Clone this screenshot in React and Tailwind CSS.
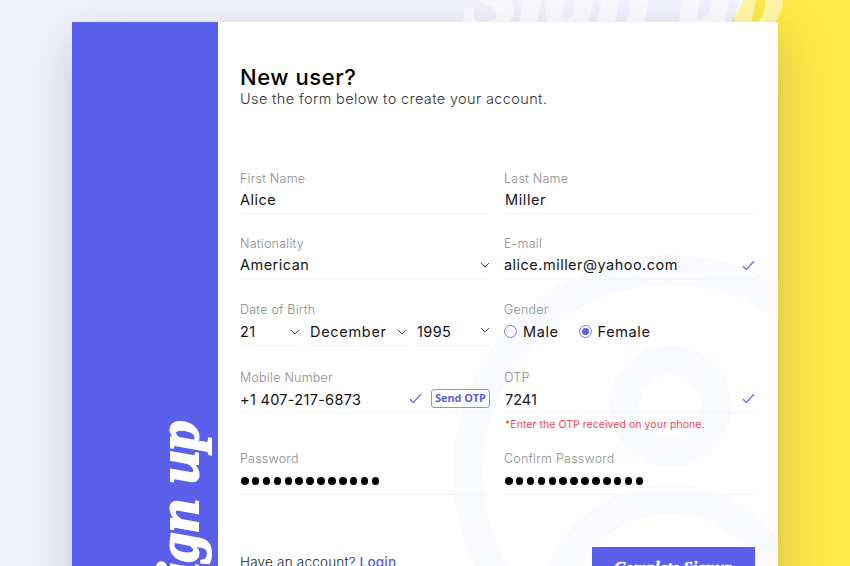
import React from "react";

const SANS = "font-['Inter','Noto_Sans',sans-serif]";

function Check() {
  return (
    <svg width="13" height="11" viewBox="0 0 13 11" fill="none" className="shrink-0">
      <path d="M1 6.2 4.4 9.4 12 1.2" stroke="#5b5fe6" strokeWidth="1.2" />
    </svg>
  );
}

function Chevron({ className = "" }) {
  return (
    <svg width="10" height="6" viewBox="0 0 10 6" fill="none" className={`shrink-0 ${className}`}>
      <path d="M1 1 5 5 9 1" stroke="#444" strokeWidth="1" />
    </svg>
  );
}

function Label({ children, className = "pt-px" }) {
  return <div className={`h-4 text-[12.5px] leading-4 font-light tracking-[0.23px] text-[#8c8c8c] ${className}`}>{children}</div>;
}

function Row({ children, className = "pb-px" }) {
  return (
    <div className={`flex h-[28px] items-center justify-between border-b border-[#f4f5f8] ${className}`}>
      {children}
    </div>
  );
}

function Value({ children, className = "tracking-[0.48px]" }) {
  return <span className={`text-[14.5px] leading-5 text-[#151515] ${className}`}>{children}</span>;
}

function Dots() {
  return (
    <div className="flex gap-[3.4px] pt-[2px] pl-px">
      {Array.from({ length: 13 }, (_, i) => (
        <span key={i} className="size-[7.5px] rounded-full bg-black" />
      ))}
    </div>
  );
}

function Radio({ label, checked }) {
  return (
    <div className="flex items-center gap-[6px]">
      <span className="mb-px flex size-[13px] items-center justify-center rounded-full border border-[#777aeb]">
        {checked && <span className="size-[7px] rounded-full bg-[#5a60ea]" />}
      </span>
      <Value className="tracking-[0.6px]">{label}</Value>
    </div>
  );
}

export default function App() {
  return (
    <div className={`relative h-[566px] w-[850px] overflow-hidden bg-[#f4f4fe] pt-[22px] pl-[72px] ${SANS}`}>
      <svg className="absolute inset-0" width="850" height="566">
        <path d="M744 0H850V566H600V260Z" fill="#feea46" />
      </svg>
      <div className="absolute top-[22px] left-[72px] h-[640px] w-[706px] shadow-[0_16px_48px_rgba(60,60,70,0.27)]" />
      <svg className="absolute inset-0" width="850" height="566">
        <text
          x="462" y="27" fontSize="88" fill="#ffffff" opacity="0.5"
          stroke="#ffffff" strokeWidth="4"
          fontFamily="Liberation Serif, serif" fontWeight="700" fontStyle="italic"
          textLength="322" lengthAdjust="spacingAndGlyphs"
        >
          Sign up
        </text>
      </svg>
      <div className="relative flex h-[640px] w-[706px] bg-white">
        <aside className="flex w-[146px] shrink-0 justify-end bg-[#5a60ea] pt-[398px] pr-[14px]">
          <span className="h-[240px] rotate-180 text-right font-['Liberation_Serif',serif] text-[60px] leading-[52px] font-bold whitespace-nowrap text-white italic [-webkit-text-stroke:2px_white] [writing-mode:vertical-rl]">
            Sign up
          </span>
        </aside>
        <main className="relative flex-1 overflow-hidden pt-[43px] pl-[22px]">
          <svg className="absolute inset-0" width="560" height="640" fill="none" stroke="#f8faff" strokeWidth="30">
            <circle cx="452" cy="450" r="202" />
            <circle cx="452" cy="384" r="46" />
            <circle cx="452" cy="595" r="118" />
          </svg>
          <div className="relative w-[516px]">
            <h1 className="h-6 text-[22px] leading-6 font-medium tracking-[0.55px] text-black">New user?</h1>
            <p className="h-5 text-[14.5px] leading-5 font-light tracking-[0.37px] text-[#333]">Use the form below to create your account.</p>
            <div className="mt-[61px] grid grid-cols-[250px_251px] gap-x-[14px]">
              <div className="h-[66px]">
                <Label>First Name</Label>
                <Row className=""><Value>Alice</Value></Row>
              </div>
              <div className="h-[66px]">
                <Label>Last Name</Label>
                <Row className=""><Value className="pl-px tracking-[0.6px]">Miller</Value></Row>
              </div>
              <div className="h-[66px]">
                <Label className="">Nationality</Label>
                <Row><Value>American</Value><Chevron /></Row>
              </div>
              <div className="h-[66px]">
                <Label className="">E-mail</Label>
                <Row><Value>alice.miller@yahoo.com</Value><Check /></Row>
              </div>
              <div className="h-[67px]">
                <Label className="">Date of Birth</Label>
                <div className="flex gap-[9px]">
                  <Row className="w-[60px]"><Value>21</Value><Chevron /></Row>
                  <Row className="w-[98px]"><Value className="pl-px tracking-[0.7px]">December</Value><Chevron /></Row>
                  <Row className="w-[74px]"><Value className="pl-px tracking-[0.4px]">1995</Value><Chevron className="mb-[3px]" /></Row>
                </div>
              </div>
              <div className="h-[67px]">
                <Label className="">Gender</Label>
                <div className="flex h-[28px] items-center gap-[20px] pb-px">
                  <Radio label="Male" />
                  <Radio label="Female" checked />
                </div>
              </div>
              <div className="h-[82px]">
                <Label>Mobile Number</Label>
                <Row>
                  <Value className="pt-[4px] tracking-[0.3px]">+1 407-217-6873</Value>
                  <div className="flex items-center gap-[9px]">
                    <Check />
                    <span className="flex h-[19px] w-[59px] items-center justify-center rounded-[3px] border border-[#8d90ee] font-['Open_Sans','Noto_Sans',sans-serif] text-[10.8px] font-bold text-[#5a60dd]">
                      Send OTP
                    </span>
                  </div>
                </Row>
              </div>
              <div className="h-[82px]">
                <Label>OTP</Label>
                <Row><Value className="pt-[4px] pl-px">7241</Value><Check /></Row>
                <div className="mt-1 pl-px text-[10.5px] leading-4 tracking-[0.05px] text-[#ee4a55]">*Enter the OTP received on your phone.</div>
              </div>
              <div className="h-[96px]">
                <Label className="">Password</Label>
                <Row><Dots /></Row>
              </div>
              <div className="h-[96px]">
                <Label className="">Confirm Password</Label>
                <Row><Dots /></Row>
              </div>
            </div>
            <div className="flex w-[515px] justify-between">
              <div className="pt-[5px] text-[13.5px] leading-5 font-light tracking-[0.2px] text-[#222]">
                Have an account? <a className="font-medium text-[#5a60dd]">Login</a>
              </div>
              <button className="h-10 w-[163px] bg-[#5a60ea] pt-[1px] text-center font-['Liberation_Serif',serif] text-[16.5px] leading-5 font-bold tracking-[0.1px] text-white italic [-webkit-text-stroke:0.5px_white]">
                Complete Signup
              </button>
            </div>
          </div>
        </main>
      </div>
    </div>
  );
}
